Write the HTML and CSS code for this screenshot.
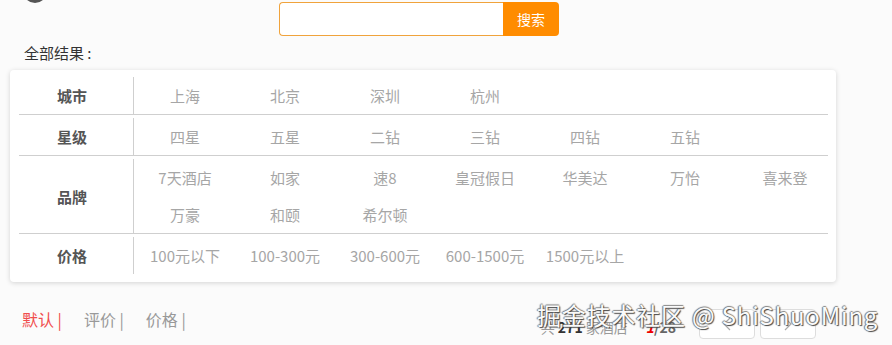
FILE: index.html
```html
<!DOCTYPE html>
<html lang="zh-CN">
<head>
    <meta charset="UTF-8">
    <meta name="viewport" content="width=device-width, initial-scale=1.0">
    <title>酒店列表</title>
    <link rel="stylesheet" href="styles.css">
</head>
<body>
    <!-- Barra de busca -->
    <div class="top-bar">
        <span class="logo"></span>
        <div class="search">
            <input class="search-input" type="text">
            <button class="search-btn">搜索</button>
        </div>
    </div>

    <div class="result-title">全部结果 :</div>

    <!-- Filtros -->
    <div class="filter-card">
        <div class="filter-row">
            <div class="filter-label">城市</div>
            <div class="filter-items">
                <span>上海</span><span>北京</span><span>深圳</span><span>杭州</span>
            </div>
        </div>
        <div class="filter-row">
            <div class="filter-label">星级</div>
            <div class="filter-items">
                <span>四星</span><span>五星</span><span>二钻</span><span>三钻</span><span>四钻</span><span>五钻</span>
            </div>
        </div>
        <div class="filter-row">
            <div class="filter-label">品牌</div>
            <div class="filter-items">
                <span>7天酒店</span><span>如家</span><span>速8</span><span>皇冠假日</span><span>华美达</span><span>万怡</span><span>喜来登</span>
                <span>万豪</span><span>和颐</span><span>希尔顿</span>
            </div>
        </div>
        <div class="filter-row">
            <div class="filter-label">价格</div>
            <div class="filter-items">
                <span>100元以下</span><span>100-300元</span><span>300-600元</span><span>600-1500元</span><span>1500元以上</span>
            </div>
        </div>
    </div>

    <!-- Ordenação e paginação -->
    <div class="sort-bar">
        <div class="sort-tabs">
            <span class="sort-tab active">默认 |</span>
            <span class="sort-tab">评价 |</span>
            <span class="sort-tab">价格 |</span>
        </div>
        <div class="pager">
            <span class="total">共 <b>271</b> 家酒店</span>
            <span class="page-num"><em>1</em>/28</span>
            <button class="page-btn">
                <svg width="12" height="14" viewBox="0 0 12 14"><polyline points="9,1 3,7 9,13" fill="none" stroke="#aaa" stroke-width="1.2"/></svg>
            </button>
            <button class="page-btn">
                <svg width="12" height="14" viewBox="0 0 12 14"><polyline points="3,1 9,7 3,13" fill="none" stroke="#aaa" stroke-width="1.2"/></svg>
            </button>
        </div>
    </div>

    <div class="watermark">掘金技术社区 @ ShiShuoMing</div>
</body>
</html>
```

FILE: styles.css
```css
/* Estilo geral */
body {
    margin: 0;
    background-color: #fbfbfb;
    font-family: "Noto Sans CJK SC", "Noto Sans", sans-serif;
    font-size: 15px;
    color: #333;
    position: relative;
}

/* Topo com busca */
.top-bar {
    display: flex;
    align-items: flex-start;
    padding-top: 2px;
}

.logo {
    width: 24px;
    height: 24px;
    margin: -23px 0 0 23px;
    border-radius: 50%;
    background-color: #555;
}

.search {
    display: flex;
    margin-left: 232px;
}

.search-input {
    box-sizing: border-box;
    width: 224px;
    height: 34px;
    margin: 0;
    border: 1px solid #f0a33c;
    border-right: none;
    border-radius: 4px 0 0 4px;
    background-color: #fff;
    outline: none;
}

.search-btn {
    width: 56px;
    height: 34px;
    border: none;
    border-radius: 0 4px 4px 0;
    background-color: #ff8c00;
    color: #fff;
    font-family: inherit;
    font-size: 14px;
    cursor: pointer;
}

.result-title {
    margin-top: 7px;
    padding-left: 24px;
    line-height: 20px;
    font-size: 15px;
    color: #333;
}

/* Card de filtros */
.filter-card {
    width: 809px;
    margin: 7px 0 0 10px;
    padding: 7px 8px 8px 9px;
    background-color: #fff;
    border-radius: 4px;
    box-shadow: 0 1px 5px rgba(0, 0, 0, 0.16);
}

.filter-row {
    display: flex;
}

.filter-row + .filter-row {
    border-top: 1px solid #cfcfcf;
    padding-top: 3px;
}

.filter-label {
    flex: 0 0 106px;
    margin-right: 8px;
    display: flex;
    align-items: center;
    justify-content: center;
    font-weight: bold;
    color: #555;
}

.filter-items {
    flex: 0 0 700px;
    display: flex;
    flex-wrap: wrap;
    padding-left: 1px;
    border-left: 1px solid #cfcfcf;
}

.filter-items span {
    width: 100px;
    height: 37px;
    line-height: 37px;
    text-align: center;
    color: #a6a6a6;
}

/* Ordenação */
.sort-bar {
    width: 824px;
    margin: 21px 0 0 11px;
    padding: 4px 0 5px;
    display: flex;
    align-items: center;
    justify-content: space-between;
    border-bottom: 1px solid #cfcfcf;
}

.sort-tabs {
    padding-left: 11px;
    margin-bottom: 9px;
    display: flex;
}

.sort-tab {
    margin-right: 22px;
    font-size: 16px;
    color: #999;
}

.sort-tab.active {
    color: #f04d4d;
}

.pager {
    display: flex;
    align-items: center;
    padding-right: 19px;
    font-size: 14px;
    color: #999;
}

.total,
.page-num {
    margin-top: 7px;
}

.total b {
    color: #333;
}

.page-num {
    margin-left: 18px;
    margin-right: 18px;
    color: #666;
    font-weight: bold;
}

.page-num em {
    color: #e00;
}

.page-btn {
    width: 56px;
    height: 30px;
    margin-left: 5px;
    display: flex;
    align-items: center;
    justify-content: center;
    border: 1px solid #ddd;
    border-radius: 4px;
    background-color: #fff;
    cursor: pointer;
}

/* Marca d'água */
.watermark {
    position: absolute;
    left: 537px;
    top: 297px;
    font-size: 24px;
    letter-spacing: 0.8px;
    color: #fafafa;
    white-space: nowrap;
    text-shadow: 1px 1px 1px #444, -1px 0 1px #777, 0 -1px 1px #888;
}
```
